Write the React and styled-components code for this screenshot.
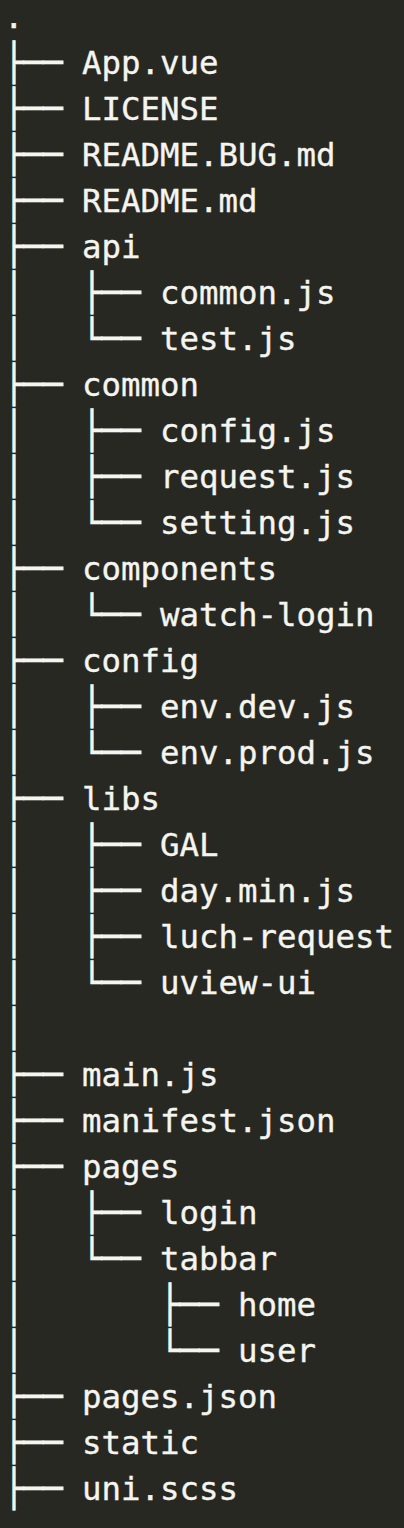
import React from "react";
import styled, { createGlobalStyle } from "styled-components";

const Global = createGlobalStyle`
  html, body {
    margin: 0;
    padding: 0;
    background: #282823;
  }
  body {
    min-height: 1528px;
    overflow: hidden;
  }
`;

const Terminal = styled.pre`
  margin: 0;
  margin-top: -6px;
  padding: 0 0 0 4px;
  background: #282823;
  color: #f5f5f0;
  font-family: "DejaVu Sans Mono", "Liberation Mono", monospace;
  font-size: 32.4px;
  line-height: 46px;
  min-height: 1534px;
  -webkit-text-stroke: 0.35px #f5f5f0;
`;

const Line = styled.div`
  display: flex;
  white-space: pre;
  height: 46px;
`;

const Branch = styled.span`
  display: inline-block;
  transform: scaleY(1.13);
  transform-origin: 50% 58%;
  -webkit-text-stroke: 0.6px #f5f5f0;
`;

const Name = styled.span``;

const lines = [
  ["", "."],
  ["├── ", "App.vue"],
  ["├── ", "LICENSE"],
  ["├── ", "README.BUG.md"],
  ["├── ", "README.md"],
  ["├── ", "api"],
  ["│   ├── ", "common.js"],
  ["│   └── ", "test.js"],
  ["├── ", "common"],
  ["│   ├── ", "config.js"],
  ["│   ├── ", "request.js"],
  ["│   └── ", "setting.js"],
  ["├── ", "components"],
  ["│   └── ", "watch-login"],
  ["├── ", "config"],
  ["│   ├── ", "env.dev.js"],
  ["│   └── ", "env.prod.js"],
  ["├── ", "libs"],
  ["│   ├── ", "GAL"],
  ["│   ├── ", "day.min.js"],
  ["│   ├── ", "luch-request"],
  ["│   └── ", "uview-ui"],
  ["│", ""],
  ["├── ", "main.js"],
  ["├── ", "manifest.json"],
  ["├── ", "pages"],
  ["│   ├── ", "login"],
  ["│   └── ", "tabbar"],
  ["│       ├── ", "home"],
  ["│       └── ", "user"],
  ["├── ", "pages.json"],
  ["├── ", "static"],
  ["├── ", "uni.scss"],
];

export default function App() {
  return (
    <>
      <Global />
      <Terminal>
        {lines.map(([branch, name], i) => (
          <Line key={i}>
            {branch && <Branch>{branch}</Branch>}
            <Name>{name}</Name>
          </Line>
        ))}
      </Terminal>
    </>
  );
}
